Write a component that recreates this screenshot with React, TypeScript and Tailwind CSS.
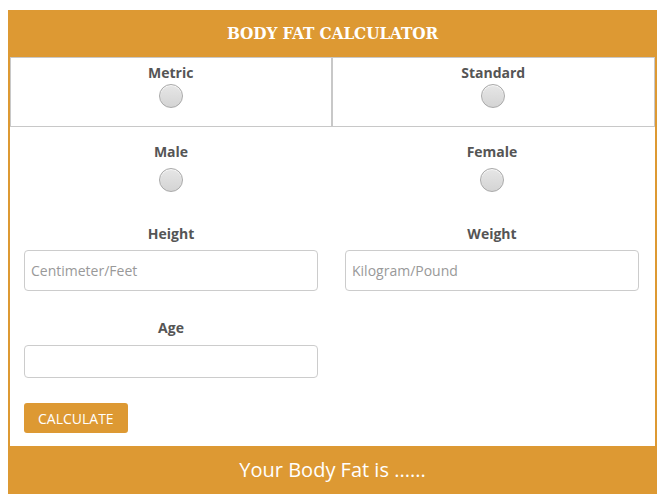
const Radio = () => (
  <div className="w-[24px] h-[24px] rounded-full border border-[#a9a9a9] bg-gradient-to-b from-[#e6e6e6] to-[#d4d4d4] shadow-[inset_0_1px_1px_rgba(255,255,255,0.8)]" />
);

const Label = ({ children }: { children: React.ReactNode }) => (
  <div className="text-[14px] font-bold text-[#555] leading-[20px]">{children}</div>
);

export default function App() {
  return (
    <div className="w-[665px] h-[499px] bg-white pt-[10px] px-[8px]" style={{ fontFamily: '"Open Sans", sans-serif' }}>
      <div className="border-x-2 border-[#dd9933] bg-white">
        <div className="h-[47px] bg-[#dd9933] flex items-center justify-center">
          <h1 className="text-white text-[17px] font-bold tracking-[-0.1px]" style={{ fontFamily: '"DejaVu Serif", serif', fontStretch: "condensed" }}>
            BODY FAT CALCULATOR
          </h1>
        </div>
        <div className="grid grid-cols-2 border border-[#c8c8c8] h-[70px]">
          <div className="border-r-2 border-[#c8c8c8] flex flex-col items-center pt-[5px] gap-[1px]">
            <Label>Metric</Label>
            <Radio />
          </div>
          <div className="flex flex-col items-center pt-[5px] gap-[1px]">
            <Label>Standard</Label>
            <Radio />
          </div>
        </div>
        <div className="grid grid-cols-2 pl-[14px] pr-[16px] gap-x-[27px] pt-[15px] pb-[13px]">
          <div className="flex flex-col items-center gap-[6px]">
            <Label>Male</Label>
            <Radio />
          </div>
          <div className="flex flex-col items-center gap-[6px]">
            <Label>Female</Label>
            <Radio />
          </div>
          <div className="flex flex-col items-center gap-[6px] mt-[32px]">
            <Label>Height</Label>
            <input placeholder="Centimeter/Feet" className="w-full h-[41px] border border-[#ccc] rounded-[4px] px-[6px] text-[14px] text-[#555] placeholder:text-[#999] outline-none" />
          </div>
          <div className="flex flex-col items-center gap-[6px] mt-[32px]">
            <Label>Weight</Label>
            <input placeholder="Kilogram/Pound" className="w-full h-[41px] border border-[#ccc] rounded-[4px] px-[6px] text-[14px] text-[#555] placeholder:text-[#999] outline-none" />
          </div>
          <div className="flex flex-col items-center gap-[7px] mt-[27px]">
            <Label>Age</Label>
            <input className="w-full h-[33px] border border-[#ccc] rounded-[4px] px-[6px] text-[14px] outline-none" />
          </div>
          <div />
          <div className="mt-[25px]">
            <button className="h-[30px] px-[14px] bg-[#dd9933] text-white text-[14px] rounded-[3px]">CALCULATE</button>
          </div>
        </div>
        <div className="h-[48px] bg-[#dd9933] flex items-center justify-center text-white text-[20px]">
          Your Body Fat is ......
        </div>
      </div>
    </div>
  );
}
